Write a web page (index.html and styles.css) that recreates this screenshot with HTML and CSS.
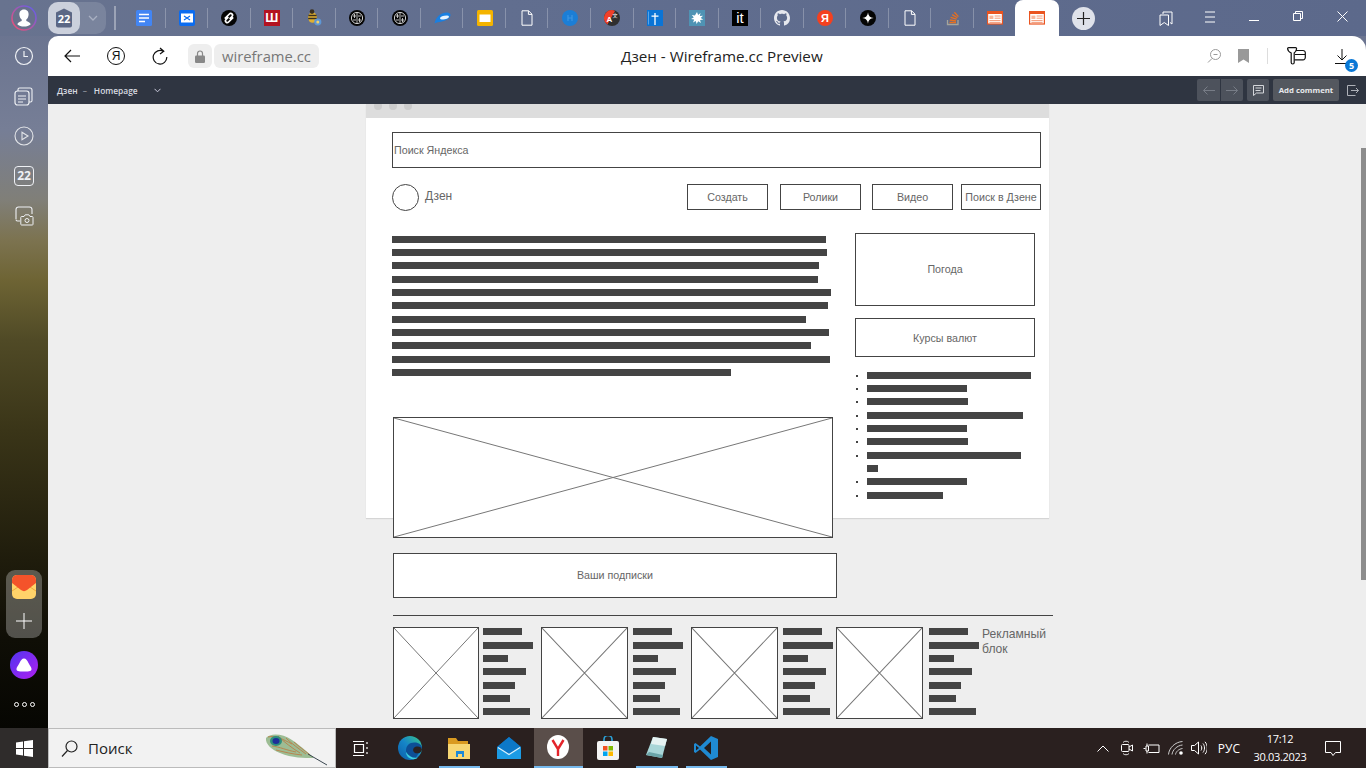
FILE: index.html
```html
<!DOCTYPE html>
<html lang="ru">
<head>
  <meta charset="UTF-8" />
  <title>Дзен - Wireframe.cc Preview</title>
  <link rel="stylesheet" href="styles.css">
</head>
<body>
  <svg class="defs" width="0" height="0">
    <symbol id="brain" viewBox="0 0 16 16">
      <circle cx="8" cy="8" r="8" fill="#050505"/>
      <circle cx="8" cy="8" r="5.6" fill="none" stroke="#cfcfcf" stroke-width="1"/>
      <path d="M8 2.5v11M4 6h3M9 6h3M4 10h3M9 10h3M5.5 4v4M10.5 8v4" stroke="#cfcfcf" stroke-width=".9" fill="none"/>
    </symbol>
    <symbol id="doc" viewBox="0 0 16 16">
      <path d="M3 .8h6.6L13 4.2v11H3zM9.4 .8v3.6H13" fill="none" stroke="#fff" stroke-width="1"/>
    </symbol>
    <symbol id="wf" viewBox="0 0 16 14">
      <rect x=".6" y=".6" width="14.8" height="12.4" fill="#fff" stroke="#ea5420" stroke-width="1.2"/>
      <rect x=".6" y=".6" width="14.8" height="2.4" fill="#ea5420"/>
      <rect x="2.4" y="4.6" width="4" height="3.4" fill="#f7b79c"/>
      <path d="M7.6 5h6M7.6 7.2h6M2.4 9.6h11.2M2.4 11.4h11.2" stroke="#f39a78" stroke-width="1"/>
    </symbol>
    <symbol id="cross" viewBox="0 0 100 100" preserveAspectRatio="none">
      <path d="M0 0L100 100M100 0L0 100" stroke="#777" stroke-width="1" vector-effect="non-scaling-stroke" fill="none"/>
    </symbol>
  </svg>

  <div class="shell">
    <header class="tabbar">
      <div class="avatar">
        <svg width="26" height="26" viewBox="0 0 26 26">
          <defs><linearGradient id="ring" x1="0" y1="1" x2="1" y2="0"><stop offset="0" stop-color="#f4506e"/><stop offset="1" stop-color="#5a5ff0"/></linearGradient></defs>
          <circle cx="13" cy="13" r="12" fill="#68718c" stroke="url(#ring)" stroke-width="1.6"/>
          <path d="M13 4.5c3.2 0 4.8 2.4 4.6 5.2-.2 2.3-1.1 3.9-2.3 4.8v1.6c1.8.9 3.7 1.3 4.4 3.1-1.6 1.5-4 2.3-6.7 2.3s-5.100-.8-6.700-2.3c.7-1.800 2.600-2.200 4.400-3.100v-1.600c-1.200-.9-2.100-2.500-2.300-4.800-.2-2.800 1.400-5.200 4.600-5.200z" fill="#fff"/>
        </svg>
      </div>
      <div class="group-pill">
        <span class="group-count">
          <svg width="22" height="22" viewBox="0 0 22 22"><path d="M11 1.500l8 4v13a2 2 0 0 1-2 2H5a2 2 0 0 1-2-2v-13z" fill="#5b6785"/><text x="11" y="16" text-anchor="middle" class="group-num">22</text></svg>
        </span>
        <span class="group-more">
          <svg width="10" height="6" viewBox="0 0 10 6"><path d="M1 1l4 4 4-4" fill="none" stroke="#a9b0c2" stroke-width="1.3"/></svg>
        </span>
      </div>
      <span class="group-sep"></span>

      <div class="tabs">
        <div class="tab"><svg width="16" height="16" viewBox="0 0 16 16"><rect width="16" height="16" rx="1.5" fill="#4285f4"/><path d="M3 4.500h10M3 8h10M3 11.500h6" stroke="#fff" stroke-width="1.500"/></svg></div>
        <div class="tab"><svg width="16" height="16" viewBox="0 0 16 16"><rect width="16" height="16" rx="2" fill="#0b6cf0"/><rect x="2" y="3.500" width="12" height="9" fill="#fff"/><path d="M5 6l6 4M11 6l-6 4" stroke="#0b6cf0" stroke-width="1.200"/></svg></div>
        <div class="tab"><svg width="16" height="16" viewBox="0 0 16 16"><circle cx="8" cy="8" r="8" fill="#050505"/><path d="M3.800 8.600l4.600-4.600a1.800 1.800 0 0 1 2.600 2.500L8.600 8.900M12.200 7.400l-4.600 4.600A1.800 1.800 0 0 1 5 9.500l2.400-2.400" fill="none" stroke="#fff" stroke-width="1.700"/></svg></div>
        <div class="tab"><span class="sq-icon sq-red">Ш</span></div>
        <div class="tab"><svg width="16" height="18" viewBox="0 0 16 18"><ellipse cx="6.500" cy="8.500" rx="4.400" ry="5.200" fill="#e0b030"/><path d="M2.400 6.500h8.200M2.200 9.500h8.600" stroke="#3a3020" stroke-width="1.300"/><circle cx="6" cy="2.600" r="2.300" fill="#3a3020"/><ellipse cx="11.800" cy="13" rx="3.600" ry="3.400" fill="#5d97d6"/><circle cx="11.800" cy="13" r="1.500" fill="#f2d36b"/></svg></div>
        <div class="tab"><svg width="16" height="16"><use href="#brain"/></svg></div>
        <div class="tab"><svg width="16" height="16"><use href="#brain"/></svg></div>
        <div class="tab"><svg width="17" height="12" viewBox="0 0 17 12"><path d="M.5 11.500C1.500 5 7 .5 13 .5c2 0 3.500 1 3.500 2.500 0 3-4 5.500-8.500 6.500-3 .6-5.500 1-7.500 2z" fill="#1a7fe0"/><ellipse cx="10.500" cy="5.500" rx="4.600" ry="1.700" fill="#e6f3ff" transform="rotate(-14 10.500 5.500)"/></svg></div>
        <div class="tab"><svg width="16" height="16" viewBox="0 0 16 16"><rect width="16" height="16" rx="1.500" fill="#f4b400"/><rect x="2.500" y="4.500" width="11" height="7.500" fill="#fff"/></svg></div>
        <div class="tab"><svg width="16" height="16"><use href="#doc"/></svg></div>
        <div class="tab"><svg width="16" height="16" viewBox="0 0 16 16"><circle cx="8" cy="8" r="8" fill="#1b7ed6"/><path d="M6 5v6M10 5v6M6 8h4" stroke="#3d95e2" stroke-width="1.200"/></svg></div>
        <div class="tab"><svg width="16" height="16" viewBox="0 0 16 16"><circle cx="8" cy="8" r="8" fill="#2f2f2f"/><path d="M8 0a8 8 0 0 0-4.600 14.500L11 1A8 8 0 0 0 8 0z" fill="#f0402a"/><text x="5.500" y="11.500" text-anchor="middle" class="glyph-a">A</text><text x="11" y="7" text-anchor="middle" class="glyph-small">文</text></svg></div>
        <div class="tab"><svg width="16" height="16" viewBox="0 0 16 16"><rect width="16" height="16" fill="#0a74d6"/><path d="M8 3v12M4.500 6.200h7" stroke="#fff" stroke-width="1.300"/><path d="M1.500 1.500v13" stroke="#6db2ec" stroke-width=".8"/></svg></div>
        <div class="tab"><svg width="16" height="16" viewBox="0 0 16 16"><rect width="16" height="16" fill="#4f93b4"/><path d="M8 2l1.100 3 2.400-2-.7 3.100 3.200-.3-2.300 2.200 2.600 1.600-3.200.3.800 3.100-2.700-1.800L7.600 14l-.8-3-2.800 1.400 1.200-2.900L2 9.100l2.800-1.500L2.800 5l3.100.5z" fill="#fff"/></svg></div>
        <div class="tab"><span class="sq-icon sq-black">it</span></div>
        <div class="tab"><svg width="16" height="16" viewBox="0 0 16 16"><path fill="#e6e8ee" d="M8 0C3.58 0 0 3.58 0 8c0 3.54 2.29 6.53 5.47 7.59.4.07.55-.17.55-.38 0-.19-.01-.82-.01-1.49-2.01.37-2.53-.49-2.69-.94-.09-.23-.48-.94-.82-1.13-.28-.15-.68-.52-.01-.53.63-.01 1.08.58 1.23.82.72 1.21 1.87.87 2.33.66.07-.52.28-.87.51-1.07-1.78-.2-3.64-.89-3.64-3.95 0-.87.31-1.59.82-2.15-.08-.2-.36-1.02.08-2.12 0 0 .67-.21 2.2.82.64-.18 1.32-.27 2-.27.68 0 1.36.09 2 .27 1.53-1.04 2.2-.82 2.2-.82.44 1.1.16 1.92.08 2.12.51.56.82 1.27.82 2.15 0 3.07-1.87 3.75-3.65 3.95.29.25.54.73.54 1.48 0 1.07-.01 1.93-.01 2.2 0 .21.15.46.55.38A8.013 8.013 0 0016 8c0-4.42-3.58-8-8-8z"/></svg></div>
        <div class="tab"><span class="round-ya">Я</span></div>
        <div class="tab"><svg width="16" height="16" viewBox="0 0 16 16"><circle cx="8" cy="8" r="8" fill="#050505"/><path d="M8 2.200C8.500 6 10 7.500 13.800 8 10 8.500 8.500 10 8 13.800 7.500 10 6 8.500 2.200 8 6 7.500 7.500 6 8 2.200z" fill="#fff"/></svg></div>
        <div class="tab"><svg width="16" height="16"><use href="#doc"/></svg></div>
        <div class="tab"><svg width="16" height="16" viewBox="0 0 16 16"><path d="M2.500 10v4.500h10.500V10" fill="none" stroke="#a5a59c" stroke-width="1.300"/><path d="M4.500 12.500h6.500M4.800 10l6.300.8M5.600 7.400l6 1.800M7.200 4.600l5.200 3.200M9.400 2.200l4 4.400" stroke="#e8701f" stroke-width="1.300" fill="none"/></svg></div>
        <div class="tab"><svg width="16" height="14"><use href="#wf"/></svg></div>
      </div>

      <div class="tab-active"><svg width="16" height="14"><use href="#wf"/></svg></div>
      <button class="new-tab"><svg width="13" height="13" viewBox="0 0 13 13"><path d="M6.500 0v13M0 6.500h13" stroke="#222" stroke-width="1.200"/></svg></button>

      <div class="win-controls">
        <span class="win-btn"><svg width="14" height="15" viewBox="0 0 14 15"><path d="M4 3V1h9v12l-2-1.500M1 4h8.500v10.500L5.250 11.500 1 14.500z" fill="none" stroke="#fff" stroke-width="1"/></svg></span>
        <span class="win-btn"><svg width="14" height="12" viewBox="0 0 14 12"><path d="M2 1h10M2 6h10M2 11h10" stroke="#fff" stroke-width="1"/></svg></span>
        <span class="win-btn"><svg width="10" height="10" viewBox="0 0 10 10"><path d="M0 9.500h10" stroke="#fff" stroke-width="1"/></svg></span>
        <span class="win-btn"><svg width="10" height="10" viewBox="0 0 10 10"><path d="M.5 2.500h7v7h-7zM2.500 2.500v-2h7v7h-2" fill="none" stroke="#fff" stroke-width="1"/></svg></span>
        <span class="win-btn"><svg width="11" height="11" viewBox="0 0 11 11"><path d="M.5 .5l10 10M10.500 .5l-10 10" stroke="#fff" stroke-width="1"/></svg></span>
      </div>
    </header>

    <aside class="sidebar">
      <div class="side-item"><svg width="20" height="20" viewBox="0 0 20 20"><circle cx="10" cy="10" r="8.500" fill="none" stroke="#eef0f4" stroke-width="1.200"/><path d="M10 5v5.500h4" fill="none" stroke="#eef0f4" stroke-width="1.200"/></svg></div>
      <div class="side-item"><svg width="20" height="20" viewBox="0 0 20 20"><rect x="1" y="5" width="14" height="14" rx="2.500" fill="none" stroke="#eef0f4" stroke-width="1.200"/><path d="M4 5V3.500A1.500 1.500 0 0 1 5.500 2H16a2 2 0 0 1 2 2v10.500a1.500 1.500 0 0 1-1.500 1.500H15M4 10h8M4 13h8M4 16h5" fill="none" stroke="#eef0f4" stroke-width="1.100"/></svg></div>
      <div class="side-item"><svg width="20" height="20" viewBox="0 0 20 20"><circle cx="10" cy="10" r="9" fill="none" stroke="#e2e4e8" stroke-width="1.100"/><path d="M8 6.200l6 3.800-6 3.800z" fill="none" stroke="#e2e4e8" stroke-width="1.100"/></svg></div>
      <div class="side-item"><span class="side-cal">22</span></div>
      <div class="side-item"><svg width="20" height="20" viewBox="0 0 20 20"><path d="M2 13V3.500A2.500 2.500 0 0 1 4.500 1h11A2.500 2.500 0 0 1 18 3.500V8M2 13.500A1.500 1.500 0 0 0 3.500 15H6" fill="none" stroke="#eef0f4" stroke-width="1.100"/><path d="M7.500 10.500h2.500l1.200-1.700h3.600l1.200 1.700h2.300a.8.800 0 0 1 .7.800v7a.7.700 0 0 1-.7.700H7.500a.7.700 0 0 1-.7-.7v-7a.8.800 0 0 1 .7-.8z" fill="none" stroke="#eef0f4" stroke-width="1"/><circle cx="13" cy="14.500" r="2" fill="none" stroke="#eef0f4" stroke-width="1"/></svg></div>

      <div class="side-panel">
        <div class="panel-mail"><svg width="24" height="24" viewBox="0 0 24 24"><rect width="24" height="24" rx="5" fill="#ffd36a"/><path d="M0 16l12-8 12 8" fill="none" stroke="#f0a93a" stroke-width="1"/><path d="M0 5a5 5 0 0 1 5-5h14a5 5 0 0 1 5 5v3l-9 7a5 5 0 0 1-6 0L0 8z" fill="#f4532a"/></svg></div>
        <div class="panel-add"><svg width="16" height="16" viewBox="0 0 16 16"><path d="M8 0v16M0 8h16" stroke="#fff" stroke-width="1"/></svg></div>
      </div>
      <div class="alice"><svg width="16" height="14" viewBox="0 0 16 14"><path d="M8 .5c2 0 3 1.500 4.500 4.500 1.500 3 3 4.500 3 6 0 2-1.500 2.500-7.500 2.500S.5 13 .5 11c0-1.500 1.500-3 3-6S6 .5 8 .5z" fill="#fff"/></svg></div>
      <div class="side-dots"><span></span><span></span><span></span></div>
    </aside>

    <main class="browser">
      <div class="toolbar">
        <div class="nav-btn"><svg width="16" height="14" viewBox="0 0 16 14"><path d="M7 1L1 7l6 6M1 7h15" fill="none" stroke="#111" stroke-width="1.200"/></svg></div>
        <div class="nav-btn"><span class="ya-circle">Я</span></div>
        <div class="nav-btn"><svg width="16" height="18" viewBox="0 0 16 18"><path d="M11.500 4.400A6.800 6.800 0 1 0 14.800 10M8 1l3.800 3.300L8 7" fill="none" stroke="#111" stroke-width="1.200"/></svg></div>
        <div class="lock-pill"><svg width="10" height="13" viewBox="0 0 10 13"><path d="M2.500 6V3.500a2.500 2.500 0 0 1 5 0V6" fill="none" stroke="#888" stroke-width="1.200"/><rect y="5.500" width="10" height="7.500" rx="1.200" fill="#888"/></svg></div>
        <div class="url-pill">wireframe.cc</div>
        <div class="page-title">Дзен - Wireframe.cc Preview</div>
        <div class="tool-right">
          <span class="tool-zoom"><svg width="14" height="14" viewBox="0 0 14 14"><circle cx="8.500" cy="5.500" r="5" fill="none" stroke="#999" stroke-width="1"/><path d="M6.500 5.500h4M5 9.500l-4 4" stroke="#999" stroke-width="1" fill="none"/></svg></span>
          <span class="tool-mark"><svg width="11" height="14" viewBox="0 0 11 14"><path d="M0 0h11v14l-5.500-3.500L0 14z" fill="#999"/></svg></span>
          <span class="tool-sep"></span>
          <span class="tool-ext"><svg width="19" height="18" viewBox="0 0 19 18"><path d="M.6 1.600A1 1 0 0 1 1.600 .6h7a1 1 0 0 1 1 1c0 2-1 3.400-2.400 4.400v9.500a1.500 1.500 0 0 1-3 0V6C2 5 .6 3.600 .6 1.600z" fill="none" stroke="#111" stroke-width="1.200"/><path d="M8.800 3.500H16a2.300 2.300 0 0 1 2.300 2.300V10.500A2.300 2.300 0 0 1 16 12.800H7.400M8 7.500h10.300" fill="none" stroke="#111" stroke-width="1.200"/></svg></span>
          <span class="tool-dl">
            <svg width="14" height="15" viewBox="0 0 14 15"><path d="M7 0v11M2.500 6.500L7 11l4.500-4.500M0 14.500h14" fill="none" stroke="#111" stroke-width="1"/></svg>
            <span class="dl-badge">5</span>
          </span>
        </div>
      </div>

      <div class="appbar">
        <div class="crumbs">
          <span>Дзен</span>
          <span class="crumb-dash">–</span>
          <span>Homepage</span>
          <svg class="crumb-arrow" width="7" height="5" viewBox="0 0 7 5"><path d="M.5 .8l3 3 3-3" fill="none" stroke="#ccd" stroke-width="1"/></svg>
        </div>
        <div class="app-actions">
          <div class="btn-group">
            <span class="app-btn"><svg width="12" height="9" viewBox="0 0 12 9"><path d="M4.500 .5l-4 4 4 4M.5 4.500H12" fill="none" stroke="#777c86" stroke-width="1"/></svg></span>
            <span class="app-btn"><svg width="12" height="9" viewBox="0 0 12 9"><path d="M7.500 .5l4 4-4 4M11.500 4.500H0" fill="none" stroke="#777c86" stroke-width="1"/></svg></span>
          </div>
          <span class="app-btn app-btn-solo"><svg width="11" height="11" viewBox="0 0 11 11"><path d="M.5 .5h10v7.500H3.500L.5 10.500zM2.500 3h6M2.500 5.500h5" fill="none" stroke="#d4d6da" stroke-width="1"/></svg></span>
          <span class="add-comment">Add comment</span>
          <span class="app-exit"><svg width="12" height="11" viewBox="0 0 12 11"><path d="M8.500 .5H.5v10h8M4 5.500h7.500M9 3l2.500 2.500L9 8" fill="none" stroke="#aeb1b8" stroke-width="1"/></svg></span>
        </div>
      </div>

      <div class="canvas">
        <div class="paper">
          <div class="paper-head"><span></span><span></span><span></span></div>
        </div>

        <div class="wf-box wf-search">Поиск Яндекса</div>
        <div class="wf-logo"></div>
        <div class="wf-label wf-logo-text">Дзен</div>
        <div class="wf-box wf-center wf-nav wf-nav-1">Создать</div>
        <div class="wf-box wf-center wf-nav wf-nav-2">Ролики</div>
        <div class="wf-box wf-center wf-nav wf-nav-3">Видео</div>
        <div class="wf-box wf-center wf-nav wf-nav-4">Поиск в Дзене</div>

        <div class="wf-text">
          <div class="bar" style="width:434px"></div>
          <div class="bar" style="width:435px"></div>
          <div class="bar" style="width:427px"></div>
          <div class="bar" style="width:426px"></div>
          <div class="bar" style="width:439px"></div>
          <div class="bar" style="width:436px"></div>
          <div class="bar" style="width:414px"></div>
          <div class="bar" style="width:437px"></div>
          <div class="bar" style="width:419px"></div>
          <div class="bar" style="width:438px"></div>
          <div class="bar" style="width:339px"></div>
        </div>

        <div class="wf-box wf-center wf-weather">Погода</div>
        <div class="wf-box wf-center wf-rates">Курсы валют</div>

        <ul class="wf-list">
          <li><div class="bar" style="width:164px"></div></li>
          <li><div class="bar" style="width:100px"></div></li>
          <li><div class="bar" style="width:101px"></div></li>
          <li><div class="bar" style="width:156px"></div></li>
          <li><div class="bar" style="width:100px"></div></li>
          <li><div class="bar" style="width:101px"></div></li>
          <li><div class="bar" style="width:154px"></div></li>
          <li class="no-mark"><div class="bar" style="width:11px"></div></li>
          <li><div class="bar" style="width:100px"></div></li>
          <li><div class="bar" style="width:76px"></div></li>
        </ul>

        <div class="wf-image wf-hero"><svg width="100%" height="100%"><use href="#cross"/></svg></div>
        <div class="wf-box wf-center wf-subs">Ваши подписки</div>
        <div class="wf-rule"></div>

        <div class="wf-image wf-thumb wf-thumb-1"><svg width="100%" height="100%"><use href="#cross"/></svg></div>
        <div class="wf-image wf-thumb wf-thumb-2"><svg width="100%" height="100%"><use href="#cross"/></svg></div>
        <div class="wf-image wf-thumb wf-thumb-3"><svg width="100%" height="100%"><use href="#cross"/></svg></div>
        <div class="wf-image wf-thumb wf-thumb-4"><svg width="100%" height="100%"><use href="#cross"/></svg></div>

        <div class="wf-mini wf-mini-1">
          <div class="bar" style="width:39px"></div><div class="bar" style="width:50px"></div><div class="bar" style="width:25px"></div><div class="bar" style="width:43px"></div><div class="bar" style="width:32px"></div><div class="bar" style="width:27px"></div><div class="bar" style="width:47px"></div>
        </div>
        <div class="wf-mini wf-mini-2">
          <div class="bar" style="width:39px"></div><div class="bar" style="width:50px"></div><div class="bar" style="width:25px"></div><div class="bar" style="width:43px"></div><div class="bar" style="width:32px"></div><div class="bar" style="width:27px"></div><div class="bar" style="width:47px"></div>
        </div>
        <div class="wf-mini wf-mini-3">
          <div class="bar" style="width:39px"></div><div class="bar" style="width:50px"></div><div class="bar" style="width:25px"></div><div class="bar" style="width:43px"></div><div class="bar" style="width:32px"></div><div class="bar" style="width:27px"></div><div class="bar" style="width:47px"></div>
        </div>
        <div class="wf-mini wf-mini-4">
          <div class="bar" style="width:39px"></div><div class="bar" style="width:50px"></div><div class="bar" style="width:25px"></div><div class="bar" style="width:43px"></div><div class="bar" style="width:32px"></div><div class="bar" style="width:27px"></div><div class="bar" style="width:47px"></div>
        </div>
        <div class="wf-label wf-ad">Рекламный блок</div>

        <div class="scrollbar"></div>
      </div>
    </main>
  </div>

  <footer class="taskbar">
    <div class="start"><svg width="17" height="17" viewBox="0 0 17 17"><path d="M0 2.500l7-1v6.500H0zM8 1.300L17 0v8H8zM0 9h7v6.500l-7-1zM8 9h9v8l-9-1.300z" fill="#fff"/></svg></div>
    <div class="search">
      <svg width="17" height="17" viewBox="0 0 17 17"><circle cx="10.500" cy="6.500" r="5.500" fill="none" stroke="#222" stroke-width="1.200"/><path d="M6.500 10.500L1 16.500" stroke="#222" stroke-width="1.200"/></svg>
      <span>Поиск</span>
      <svg class="feather" width="64" height="34" viewBox="0 0 64 34"><path d="M2 6C6 1 18 1 28 8s18 14 22 18C40 26 28 26 16 21 8 18 1 12 2 6z" fill="#9dbd94"/><path d="M4 5c8-2 14 2 24 7M8 14c8 1 14 4 24 6M14 4c6 6 14 12 22 17M22 6c6 6 12 10 20 16M12 18c8 2 16 4 26 5M30 10c4 4 10 8 16 13" stroke="#b8854f" stroke-width="1" fill="none"/><ellipse cx="12" cy="9" rx="6" ry="5" fill="#2f8f7d"/><ellipse cx="12" cy="9" rx="3.500" ry="3" fill="#1d2f9a"/><path d="M44 22l19 11" stroke="#3b4750" stroke-width="1"/></svg>
    </div>
    <div class="task-apps">
      <div class="task-app"><svg width="18" height="15" viewBox="0 0 18 15"><path d="M1 .5h11M1 14.500h11M2.500 3.500h9v8h-9zM15 1v2M15 6v2M15 11v2" fill="none" stroke="#fff" stroke-width="1.200"/></svg></div>
      <div class="task-app"><svg width="24" height="24" viewBox="0 0 24 24"><defs><linearGradient id="edge" x1="1" y1="0" x2="0" y2="1"><stop offset="0" stop-color="#3ac88a"/><stop offset=".5" stop-color="#1585c8"/><stop offset="1" stop-color="#0c5ea8"/></linearGradient></defs><circle cx="12" cy="12" r="12" fill="url(#edge)"/><path d="M24 12c0-3-3-5.500-7.500-5.500C11 6.500 8 10 8 14.500c0 4.500 3.500 9 9 8.500" fill="#0d4f96"/><path d="M24 13.500c-.5-2.500-3-3.500-5.500-3-3 .5-4 3-3 5 1 1.800 3.500 2.300 6 1.500 1.200-1 2.300-2 2.500-3.500z" fill="#2a2222"/><path d="M8 16c0 4 3.500 8 9 7 1.200-.3 2.300-.8 3-1.500-5 1-9-1-12-5.500z" fill="#3bd0e0"/></svg></div>
      <div class="task-app task-open"><svg width="24" height="24" viewBox="0 0 24 24"><path d="M1 2h8l2 3h10v4H1z" fill="#d99a21"/><rect x="1" y="8" width="22" height="15" fill="#f7d774"/><rect x="9" y="15" width="8" height="6" fill="#1c89d8"/><rect x="11" y="18" width="4" height="3" fill="#f7d774"/></svg></div>
      <div class="task-app"><svg width="24" height="24" viewBox="0 0 24 24"><path d="M12 1L24 11v12H0V11z" fill="#0a64b0"/><path d="M0 11h24v12H0z" fill="#1c9be4"/><path d="M0 11l12-10 12 10-12 7z" fill="#0d78c8"/><path d="M1 11.500l11 7 11-7" fill="none" stroke="#d8f0fc" stroke-width="1.200"/></svg></div>
      <div class="task-app task-active"><span class="task-ya"><svg width="22" height="24" viewBox="0 0 22 24"><ellipse cx="11" cy="12" rx="11" ry="12" fill="#fff"/><path d="M5.500 5l5.500 9v7M16.500 5L11 14" fill="none" stroke="#e3242b" stroke-width="2.400"/></svg></span></div>
      <div class="task-app"><svg width="22" height="24" viewBox="0 0 22 24"><path d="M7 6V3.500a4 4 0 0 1 8 0V6" fill="none" stroke="#2aa4dc" stroke-width="1.600"/><rect y="5" width="22" height="19" rx="2" fill="#f4f4f4"/><rect x="6" y="10" width="4.500" height="4.500" fill="#f25022"/><rect x="11.500" y="10" width="4.500" height="4.500" fill="#7fba00"/><rect x="6" y="15.500" width="4.500" height="4.500" fill="#00a4ef"/><rect x="11.500" y="15.500" width="4.500" height="4.500" fill="#ffb900"/></svg></div>
      <div class="task-app task-open"><svg width="22" height="24" viewBox="0 0 22 24"><path d="M7 1l14 2-5 19-16-3z" fill="#a9d6d8"/><path d="M7 1l14 2-2 7-14-2z" fill="#e6f2f2"/><path d="M0 19l16 3 1-3-14-3z" fill="#6aa4a8"/></svg></div>
      <div class="task-app task-open"><svg width="24" height="24" viewBox="0 0 24 24"><path d="M17 0l7 3v18l-7 3L6 13.500 1.500 17 0 16V8l1.500-1L6 10.500z" fill="#1f8ad2"/><path d="M17 5.500L10 12l7 6.500z" fill="#231d1d"/><path d="M2 9.500v5L5 12z" fill="#231d1d"/></svg></div>
    </div>
    <div class="tray">
      <span class="tray-up"><svg width="12" height="7" viewBox="0 0 12 7"><path d="M.5 6.500L6 1l5.500 5.500" fill="none" stroke="#fff" stroke-width="1"/></svg></span>
      <span class="tray-meet"><svg width="12" height="16" viewBox="0 0 12 16"><path d="M2 2.500C3 .800 7 .800 8 2.500M2 13.500c1 1.700 5 1.700 6 0" fill="none" stroke="#ddd" stroke-width="1"/><rect x=".5" y="4.500" width="7.500" height="7" rx="1" fill="none" stroke="#fff"/><path d="M8 7l3.500-2v6L8 9" fill="none" stroke="#fff"/></svg></span>
      <span class="tray-power"><svg width="17" height="11" viewBox="0 0 17 11"><path d="M.5 5.500h2M3 3h2.500v5H3zM4 .5V3M4 8v2.500" fill="none" stroke="#fff"/><path d="M5.500 2h10.500v7.500H5.500" fill="none" stroke="#fff"/></svg></span>
      <span class="tray-wifi"><svg width="16" height="14" viewBox="0 0 16 14"><path d="M.5 13.500C1 7 7 1 14.500 .5M4 13.500C4.500 9 9 4.500 14.500 4M7.500 13.500c.3-2.500 3-5.500 7-6" fill="none" stroke="#ccc" stroke-width="1"/><circle cx="13" cy="12" r="1.800" fill="#fff"/></svg></span>
      <span class="tray-sound"><svg width="16" height="14" viewBox="0 0 16 14"><path d="M.5 4.500h3L7.500 1v12l-4-3.500h-3zM10 4.500c1 1.500 1 3.500 0 5M12 2.500c2 2.500 2 6.500 0 9M14 .8c3 3.500 3 9 0 12.400" fill="none" stroke="#fff" stroke-width="1"/></svg></span>
      <span class="tray-lang">РУС</span>
      <div class="tray-clock"><span>17:12</span><span>30.03.2023</span></div>
      <span class="tray-note"><svg width="16" height="15" viewBox="0 0 16 15"><path d="M.5 .5h15v11h-5L8 14.500 6 11.500H.5z" fill="none" stroke="#fff" stroke-width="1"/></svg></span>
    </div>
  </footer>
</body>
</html>
```
FILE: styles.css
```css
* {
  box-sizing: border-box;
}

html, body {
  margin: 0;
  height: 768px;
  overflow: hidden;
}

body {
  font-family: "Open Sans", "Liberation Sans", sans-serif;
  display: flex;
  flex-direction: column;
  background: #000;
}

.defs {
  position: absolute;
}

svg {
  display: block;
  flex: none;
}

.shell {
  height: 728px;
  display: grid;
  grid-template-columns: 48px 1fr;
  grid-template-rows: 36px 1fr;
  background: linear-gradient(to bottom, #67718e 0, #767e96 130px, #807f78 200px, #7c7350 240px, #6e6434 280px, #504a26 340px, #3a3518 430px, #1f1c0c 560px, #0f0e06 640px, #060602 728px);
}

/* tab strip */
.tabbar {
  grid-column: 1 / 3;
  display: flex;
  align-items: center;
  background: linear-gradient(to right, #68738f 0, #616e8f 500px, #5c698b 1366px);
}

.avatar {
  width: 48px;
  display: flex;
  justify-content: center;
}

.group-pill {
  display: flex;
  width: 58px;
  height: 32px;
  border-radius: 10px;
  background: rgba(255,255,255,0.13);
}

.group-count {
  width: 32px;
  display: flex;
  align-items: center;
  justify-content: center;
  background: #cbd0dc;
  border-radius: 10px;
}

.group-num {
  font: 700 11px "Open Sans", sans-serif;
  fill: #fff;
}

.group-more {
  flex: 1;
  display: flex;
  align-items: center;
  justify-content: center;
}

.group-sep {
  width: 2px;
  height: 24px;
  margin: 0 7px 0 8px;
  background: rgba(255,255,255,0.35);
}

.tabs {
  display: flex;
  width: 893px;
  height: 36px;
}

.tab {
  position: relative;
  flex: 0 0 42.55px;
  display: flex;
  align-items: center;
  justify-content: center;
}

.tab::after {
  content: "";
  position: absolute;
  right: 0;
  top: 8px;
  height: 20px;
  width: 1px;
  background: rgba(255,255,255,0.25);
}

.tab:last-child::after {
  display: none;
}

.sq-icon {
  width: 16px;
  height: 16px;
  display: flex;
  align-items: center;
  justify-content: center;
  color: #fff;
  font-family: "Liberation Sans", sans-serif;
  font-size: 13px;
  line-height: 16px;
}

.sq-red {
  background: #b31320;
  font-weight: 700;
}

.sq-black {
  background: #000;
  font-size: 15px;
}

.round-ya {
  width: 16px;
  height: 16px;
  border-radius: 50%;
  background: #f4401f;
  color: #fff;
  font: 700 11px/16px "Liberation Sans", sans-serif;
  text-align: center;
}

.glyph-a {
  font: 700 8px "Liberation Sans", sans-serif;
  fill: #fff;
}

.glyph-small {
  font: 5px "Noto Sans CJK SC", sans-serif;
  fill: #fff;
}

.tab-active {
  width: 44px;
  height: 36px;
  display: flex;
  align-items: center;
  justify-content: center;
  background: #fff;
  border-radius: 8px 8px 0 0;
  margin-left: -1px;
}

.new-tab {
  width: 23px;
  height: 23px;
  margin-left: 13px;
  padding: 0;
  border: none;
  border-radius: 50%;
  background: #dfe2ea;
  display: flex;
  align-items: center;
  justify-content: center;
}

.win-controls {
  display: flex;
  margin-left: auto;
  margin-right: 2px;
}

.win-btn {
  width: 44px;
  display: flex;
  justify-content: center;
}

/* left rail */
.sidebar {
  display: flex;
  flex-direction: column;
  align-items: center;
}

.side-item {
  height: 40px;
  width: 48px;
  display: flex;
  align-items: center;
  justify-content: center;
}

.side-cal {
  width: 20px;
  height: 20px;
  border: 1px solid #eef0f4;
  border-radius: 4px;
  color: #eef0f4;
  font: 700 12px/18px "Open Sans", sans-serif;
  text-align: center;
}

.side-panel {
  margin-top: auto;
  width: 36px;
  height: 68px;
  border-radius: 9px;
  background: rgba(255,255,255,0.28);
  display: flex;
  flex-direction: column;
  align-items: center;
}

.panel-mail {
  margin-top: 5px;
}

.panel-add {
  margin-top: 14px;
}

.alice {
  width: 28px;
  height: 28px;
  margin-top: 13px;
  border-radius: 50%;
  background: linear-gradient(135deg, #4f35f0, #b01ff0);
  display: flex;
  align-items: center;
  justify-content: center;
}

.side-dots {
  display: flex;
  gap: 3px;
  margin: 23px 0 21px;
}

.side-dots span {
  width: 5px;
  height: 5px;
  border: 1px solid #fff;
  border-radius: 50%;
}

/* browser */
.browser {
  display: flex;
  flex-direction: column;
  min-width: 0;
}

.toolbar {
  height: 40px;
  flex: none;
  display: flex;
  align-items: center;
  position: relative;
  background: #fff;
  border-radius: 10px 14px 0 0;
  padding-left: 2px;
}

.nav-btn {
  width: 44px;
  display: flex;
  justify-content: center;
}

.ya-circle {
  width: 18px;
  height: 18px;
  border: 1px solid #111;
  border-radius: 50%;
  font: 12px/16px "Liberation Sans", sans-serif;
  text-align: center;
  color: #111;
}

.lock-pill {
  width: 24px;
  height: 24px;
  margin-left: 6px;
  display: flex;
  align-items: center;
  justify-content: center;
  background: #eee;
  border-radius: 6px;
}

.url-pill {
  width: 105px;
  height: 24px;
  margin-left: 2px;
  background: #eee;
  border-radius: 6px;
  color: #777;
  font-size: 14.8px;
  line-height: 24px;
  text-align: center;
}

.page-title {
  position: absolute;
  left: 573px;
  top: 10px;
  color: #222;
  font-size: 15.2px;
  line-height: 20px;
  white-space: nowrap;
}

.tool-right {
  margin-left: auto;
  display: flex;
  align-items: center;
}

.tool-zoom {
  margin-right: 17px;
}

.tool-mark {
  margin-right: 18px;
}

.tool-sep {
  width: 1px;
  height: 16px;
  margin-right: 19px;
  background: #ddd;
}

.tool-ext {
  margin-right: 29px;
}

.tool-dl {
  position: relative;
  margin-right: 17px;
}

.dl-badge {
  position: absolute;
  left: 10px;
  top: 10px;
  width: 13px;
  height: 13px;
  border-radius: 50%;
  background: #0a78d6;
  color: #fff;
  font: 700 9px/13px "Open Sans", sans-serif;
  text-align: center;
}

.appbar {
  height: 28px;
  flex: none;
  display: flex;
  align-items: center;
  justify-content: space-between;
  background: #2f3541;
  color: #d8dae0;
  font-size: 8.4px;
  font-weight: 600;
}

.crumbs {
  display: flex;
  align-items: center;
  padding-left: 9px;
}

.crumb-dash {
  margin: 0 7px 0 5px;
  color: #8a8e98;
}

.crumb-arrow {
  margin-left: 16px;
}

.app-actions {
  display: flex;
  align-items: center;
  gap: 4px;
  padding-right: 7px;
}

.btn-group {
  display: flex;
  gap: 1px;
}

.app-btn {
  width: 23px;
  height: 22px;
  display: flex;
  align-items: center;
  justify-content: center;
  background: #4d525c;
}

.btn-group .app-btn:first-child {
  border-radius: 2px 0 0 2px;
}

.btn-group .app-btn:last-child {
  width: 22px;
  border-radius: 0 2px 2px 0;
}

.app-btn-solo {
  width: 22px;
  border-radius: 2px;
}

.add-comment {
  width: 66px;
  height: 22px;
  background: #54585f;
  border-radius: 2px;
  color: #e8e9ec;
  font-size: 7.8px;
  font-weight: 700;
  line-height: 22px;
  text-align: center;
}

.app-exit {
  margin-left: 4px;
}

/* wireframe canvas, items sit at their drawn coordinates */
.canvas {
  position: relative;
  flex: 1;
  background: #eee;
  overflow: hidden;
  font-family: "Liberation Sans", sans-serif;
  font-size: 10.7px;
  color: #666;
}

.paper {
  position: absolute;
  left: 318px;
  top: 0;
  width: 683px;
  height: 414px;
  background: #fff;
  box-shadow: 0 1px 1px rgba(0,0,0,0.1);
}

.paper-head {
  height: 14px;
  display: flex;
  gap: 7px;
  padding-left: 8px;
  background: #ddd;
  overflow: hidden;
}

.paper-head span {
  width: 8px;
  height: 8px;
  margin-top: -2px;
  border-radius: 50%;
  background: #ccc;
}

.wf-box {
  position: absolute;
  background: #fff;
  border: 1px solid #444;
}

.wf-center {
  display: flex;
  align-items: center;
  justify-content: center;
}

.wf-search {
  left: 344px;
  top: 28px;
  width: 649px;
  height: 36px;
  padding-left: 1px;
  line-height: 34px;
}

.wf-logo {
  position: absolute;
  left: 344px;
  top: 80px;
  width: 27px;
  height: 27px;
  border: 1px solid #444;
  border-radius: 50%;
  background: #fff;
}

.wf-label {
  position: absolute;
  color: #666;
}

.wf-logo-text {
  left: 377px;
  top: 85px;
  font-size: 12px;
}

.wf-nav {
  top: 80px;
  height: 26px;
}

.wf-nav-1 { left: 639px; width: 81px; }
.wf-nav-2 { left: 732px; width: 81px; }
.wf-nav-3 { left: 824px; width: 81px; }
.wf-nav-4 { left: 913px; width: 80px; white-space: nowrap; }

.bar {
  height: 7px;
  background: #444;
}

.wf-text {
  position: absolute;
  left: 344px;
  top: 131.85px;
  display: flex;
  flex-direction: column;
  gap: 6.3px;
}

.wf-weather {
  left: 807px;
  top: 129px;
  width: 180px;
  height: 73px;
  padding-bottom: 2px;
}

.wf-rates {
  left: 807px;
  top: 214px;
  width: 180px;
  height: 39px;
}

.wf-list {
  position: absolute;
  left: 819px;
  top: 267.85px;
  margin: 0;
  padding: 0;
  list-style: none;
  display: flex;
  flex-direction: column;
  gap: 6.3px;
}

.wf-list li {
  position: relative;
}

.wf-list li::before {
  content: "";
  position: absolute;
  left: -11px;
  top: 3px;
  width: 2px;
  height: 2px;
  background: #444;
}

.wf-list li.no-mark::before {
  display: none;
}

.wf-image {
  position: absolute;
  background: #fff;
  border: 1px solid #444;
}

.wf-hero {
  left: 345px;
  top: 313px;
  width: 440px;
  height: 121px;
}

.wf-subs {
  left: 345px;
  top: 449px;
  width: 444px;
  height: 45px;
  padding-bottom: 2px;
}

.wf-rule {
  position: absolute;
  left: 345px;
  top: 511px;
  width: 660px;
  height: 1px;
  background: #444;
}

.wf-thumb {
  top: 523px;
  height: 92px;
}

.wf-thumb-1 { left: 345px; width: 86px; }
.wf-thumb-2 { left: 493px; width: 87px; }
.wf-thumb-3 { left: 643px; width: 87px; }
.wf-thumb-4 { left: 788px; width: 87px; }

.wf-mini {
  position: absolute;
  top: 524.4px;
  display: flex;
  flex-direction: column;
  gap: 6.3px;
}

.wf-mini-1 { left: 435px; }
.wf-mini-2 { left: 585px; }
.wf-mini-3 { left: 735px; }
.wf-mini-4 { left: 881px; }

.wf-ad {
  left: 934px;
  top: 523px;
  width: 70px;
  font-size: 12.1px;
  line-height: 15px;
}

.scrollbar {
  position: absolute;
  right: 0;
  top: 44px;
  width: 5px;
  height: 432px;
  background: #8c8c8c;
}

/* windows taskbar */
.taskbar {
  height: 40px;
  flex: none;
  display: flex;
  background: #2a201f;
  color: #fff;
}

.start {
  width: 48px;
  display: flex;
  align-items: center;
  justify-content: center;
  background: #2f2c2b;
}

.search {
  position: relative;
  width: 288px;
  display: flex;
  align-items: center;
  padding-left: 12px;
  background: #f2f2f2;
  border: 1px solid #bbb;
  color: #222;
  font-size: 15px;
}

.search span {
  margin-left: 10px;
}

.feather {
  position: absolute;
  left: 215px;
  top: 3px;
}

.task-apps {
  display: flex;
}

.task-app {
  position: relative;
  width: 49.4px;
  display: flex;
  align-items: center;
  justify-content: center;
}

.task-open::after {
  content: "";
  position: absolute;
  left: 4px;
  right: 4px;
  bottom: 0;
  height: 2px;
  background: #76b9ed;
}

.task-active {
  background: #5a4e4a;
  border-bottom: 2px solid #76b9ed;
}

.tray {
  margin-left: auto;
  display: flex;
  align-items: center;
  font-size: 12px;
}

.tray-up { margin-right: 12px; }
.tray-meet { margin-right: 10px; }
.tray-power { margin-right: 7.5px; }
.tray-wifi { margin-right: 7px; }
.tray-sound { margin-right: 11px; }
.tray-lang { margin-right: 7px; }

.tray-clock {
  width: 66px;
  display: flex;
  flex-direction: column;
  align-items: center;
  gap: 2px;
  line-height: 16px;
  margin-right: 12px;
  font-size: 11px;
  letter-spacing: -0.3px;
}

.tray-note {
  margin-right: 25px;
}
```
